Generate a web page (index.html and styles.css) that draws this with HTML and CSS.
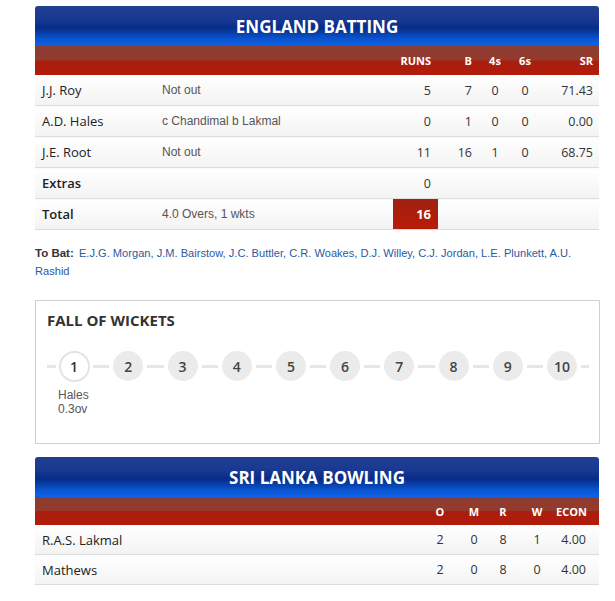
FILE: index.html
```html
<!DOCTYPE html>
<html>
<head>
<meta charset="utf-8">
<link rel="stylesheet" href="styles.css">
</head>
<body>
<div class="page">
  <section class="card">
    <div class="title-bar">ENGLAND BATTING</div>
    <table class="score bat">
      <colgroup>
        <col class="c-name"><col class="c-dis"><col class="c-runs"><col class="c-b"><col class="c-4s"><col class="c-6s"><col class="c-sr">
      </colgroup>
      <thead>
        <tr><th></th><th></th><th class="r">RUNS</th><th class="r">B</th><th class="c">4s</th><th class="c">6s</th><th class="r">SR</th></tr>
      </thead>
      <tbody>
        <tr><td class="name">J.J. Roy</td><td class="dis">Not out</td><td class="r">5</td><td class="r">7</td><td class="c">0</td><td class="c">0</td><td class="r">71.43</td></tr>
        <tr><td class="name">A.D. Hales</td><td class="dis">c Chandimal b Lakmal</td><td class="r">0</td><td class="r">1</td><td class="c">0</td><td class="c">0</td><td class="r">0.00</td></tr>
        <tr><td class="name">J.E. Root</td><td class="dis">Not out</td><td class="r">11</td><td class="r">16</td><td class="c">1</td><td class="c">0</td><td class="r">68.75</td></tr>
        <tr><td class="name strong">Extras</td><td class="dis"></td><td class="r">0</td><td></td><td></td><td></td><td></td></tr>
        <tr><td class="name strong">Total</td><td class="dis">4.0 Overs, 1 wkts</td><td class="r total">16</td><td></td><td></td><td></td><td></td></tr>
      </tbody>
    </table>
  </section>

  <p class="to-bat"><b class="to-bat-label">To Bat:</b> <span class="to-bat-list">E.J.G. Morgan, J.M. Bairstow, J.C. Buttler, C.R. Woakes, D.J. Willey, C.J. Jordan, L.E. Plunkett, A.U. Rashid</span></p>

  <section class="fow">
    <h2>FALL OF WICKETS</h2>
    <div class="fow-track">
      <div class="wk active"><span class="dot">1</span>
        <div class="wk-info">Hales<br>0.3ov</div>
      </div>
      <div class="wk"><span class="dot">2</span></div>
      <div class="wk"><span class="dot">3</span></div>
      <div class="wk"><span class="dot">4</span></div>
      <div class="wk"><span class="dot">5</span></div>
      <div class="wk"><span class="dot">6</span></div>
      <div class="wk"><span class="dot">7</span></div>
      <div class="wk"><span class="dot">8</span></div>
      <div class="wk"><span class="dot">9</span></div>
      <div class="wk"><span class="dot">10</span></div>
    </div>
  </section>

  <section class="card">
    <div class="title-bar">SRI LANKA BOWLING</div>
    <table class="score bowl">
      <colgroup>
        <col class="b-name"><col class="b-o"><col class="b-m"><col class="b-r"><col class="b-w"><col class="b-econ">
      </colgroup>
      <thead>
        <tr><th></th><th class="c">O</th><th class="c">M</th><th class="c">R</th><th class="c">W</th><th class="r econ">ECON</th></tr>
      </thead>
      <tbody>
        <tr><td class="name">R.A.S. Lakmal</td><td class="c">2</td><td class="c">0</td><td class="c">8</td><td class="c">1</td><td class="r econ">4.00</td></tr>
        <tr><td class="name">Mathews</td><td class="c">2</td><td class="c">0</td><td class="c">8</td><td class="c">0</td><td class="r econ">4.00</td></tr>
      </tbody>
    </table>
  </section>
</div>
</body>
</html>
```

FILE: styles.css
```css
html, body {
  margin: 0;
  padding: 0;
  background: #fff;
}

.page {
  width: 566px;
  padding: 6px 0 0 35px;
  font-family: "Open Sans", "Liberation Sans", sans-serif;
  color: #333;
}

.card {
  width: 564px;
}

.title-bar {
  height: 40px;
  line-height: 41px;
  text-align: center;
  color: #fff;
  font-weight: 700;
  font-size: 17px;
  border-radius: 3px 3px 0 0;
  background: linear-gradient(to bottom, #223f90 0%, #183891 35%, #062c87 55%, #0a54cf 82%, #0d63e8 100%);
}

.score {
  width: 564px;
  table-layout: fixed;
  border-collapse: collapse;
}

.score thead th {
  height: 29px;
  padding: 0 7px;
  font-size: 11px;
  font-weight: 700;
  color: #fff;
  background: linear-gradient(to bottom, #8b3c33 0%, #953a2b 48%, #a81e0f 52%, #b41b09 100%);
}

.bowl thead th {
  height: 28px;
}

.score tbody td {
  height: 30px;
  padding: 0 7px;
  font-size: 12.5px;
  color: #333;
  border-bottom: 1px solid #ddd;
  background: linear-gradient(to bottom, #ffffff 0%, #f3f3f3 100%);
  white-space: nowrap;
}

.bowl tbody td {
  height: 29px;
}

.r { text-align: right; }
.c { text-align: center; }

.c-name { width: 120px; }
.c-dis { width: 238px; }
.c-runs { width: 45px; }
.c-b { width: 41px; }
.c-4s { width: 32px; }
.c-6s { width: 28px; }
.c-sr { width: 60px; }

.score th.c, .score td.c { padding: 0; }
.bat td:last-child, .bat th:last-child { padding-right: 6px; }

.score td.name {
  color: #222;
  font-size: 13px;
}

.score td.strong {
  font-weight: 600;
  font-size: 13px;
}

.score td.dis {
  font-family: "Liberation Sans", Arial, sans-serif;
  font-size: 12px;
  color: #555;
}

.score td.total {
  color: #fff;
  font-weight: 700;
  font-size: 13px;
  background: linear-gradient(to bottom, #a1200f 0%, #b81b08 100%);
}

.b-name { width: 385px; }
.b-o { width: 40px; }
.b-m { width: 28px; }
.b-r { width: 30px; }
.b-w { width: 38px; }
.b-econ { width: 43px; }

.bowl .econ { padding-right: 13px; padding-left: 0; }

.to-bat {
  margin: 14px 0 0;
  font-family: "Liberation Sans", Arial, sans-serif;
  font-size: 11.5px;
  line-height: 18px;
  color: #333;
  width: 564px;
}

.to-bat-label {
  color: #333;
  margin-right: 2px;
}

.to-bat-list {
  color: #2c59a0;
  font-size: 11.1px;
}

.fow {
  margin-top: 20px;
  width: 563px;
  height: 142px;
  border: 1px solid #d0d0d0;
}

.fow h2 {
  margin: 0;
  padding: 9px 0 0 11px;
  font-size: 15px;
  line-height: 20px;
  font-weight: 700;
  color: #333;
}

.fow-track {
  display: flex;
  margin: 21px 10px 0 11px;
}

.wk {
  flex: 1;
  position: relative;
  display: flex;
  flex-direction: column;
  align-items: center;
}

.wk::before {
  content: "";
  position: absolute;
  left: 0;
  right: 0;
  top: 14px;
  height: 3px;
  background: #e6e6e6;
}

.dot {
  position: relative;
  width: 30px;
  height: 30px;
  border-radius: 50%;
  background: #ebebeb;
  box-shadow: 0 0 0 4px #fff;
  display: flex;
  align-items: center;
  justify-content: center;
  font-size: 14px;
  font-weight: 600;
  color: #444;
}

.wk.active .dot {
  width: 27px;
  height: 27px;
  background: #fff;
  border: 2px solid #e3e3e3;
  box-shadow: 0 0 0 3px #fff;
  color: #333;
}

.wk-info {
  align-self: flex-start;
  margin: 6px 0 0 11px;
  font-family: "Liberation Sans", Arial, sans-serif;
  font-size: 12px;
  line-height: 14px;
  color: #555;
}

.fow + .card {
  margin-top: 13px;
}
```
